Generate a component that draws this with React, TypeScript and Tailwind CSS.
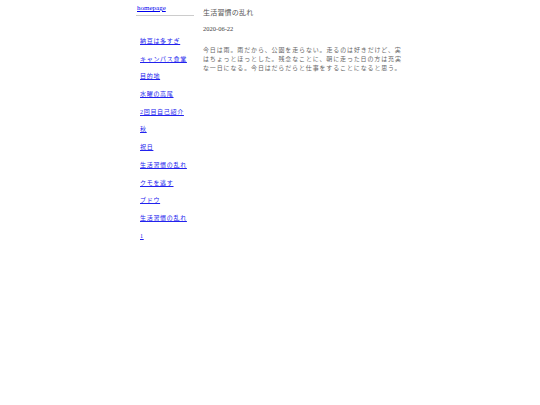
import React from 'react';

const links = [
  '納豆は多すぎ',
  'キャンパス食堂',
  '目的地',
  '水曜の高尾',
  '2回目自己紹介',
  '秋',
  '祝日',
  '生活習慣の乱れ',
  'クモを逃す',
  'ブドウ',
  '生活習慣の乱れ',
  '1',
];

export default function App() {
  return (
    <div className="w-[540px] h-[405px] bg-white font-['Liberation_Serif','Noto_Sans_CJK_JP',serif]">
      <div className="flex pl-[136px] pt-[4px]">
        {/* サイドバー */}
        <div className="w-[58px] shrink-0">
          <div className="border-b border-[#cccccc] pb-[3px] pl-[1px] text-[7px] leading-[8px]">
            <a href="#" className="text-[#0000ee] underline">homepage</a>
          </div>
          <ul className="mt-[21px] pl-[4px] flex flex-col gap-[9.7px] text-[6px] leading-[8px]">
            {links.map((l, i) => (
              <li key={i}>
                <a href="#" className="text-[#2222ee] underline tracking-[0.7px]">{l}</a>
              </li>
            ))}
          </ul>
        </div>

        {/* 本文 */}
        <div className="ml-[9px] w-[202px] pt-[4px]">
          <h1 className="text-[7px] leading-[10px] text-[#555555] tracking-[0.2px]">生活習慣の乱れ</h1>
          <p className="mt-[6px] text-[6.5px] leading-[9px] text-[#444444] font-normal">2020-06-22</p>
          <p className="mt-[13px] text-[6px] leading-[9px] text-[#666666] tracking-[0.86px]">
            今日は雨。雨だから、公園を走らない。走るのは好きだけど、実はちょっとほっとした。残念なことに、朝に走った日の方は充実な一日になる。今日はだらだらと仕事をすることになると思う。
          </p>
        </div>
      </div>
    </div>
  );
}
